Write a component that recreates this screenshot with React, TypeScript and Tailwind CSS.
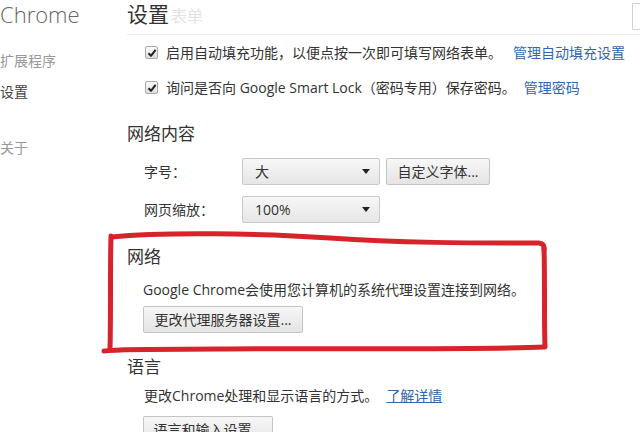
import React from "react";

const font = { fontFamily: '"Open Sans", "Noto Sans CJK SC", sans-serif' };

const CheckBox = () => (
  <span className="w-[13px] h-[13px] border border-[#a9a9a9] rounded-[2px] bg-gradient-to-b from-[#fafafa] to-[#dedede] flex items-center justify-center shrink-0">
    <svg width="10" height="10" viewBox="0 0 10 10">
      <path d="M1.5 5.2 L4 7.8 L8.6 1.8" fill="none" stroke="#222" strokeWidth="2" strokeLinejoin="round" />
    </svg>
  </span>
);

const SelectBox = ({ value }: { value: string }) => (
  <div className="w-[138px] h-[27px] border border-[#c9c9c9] rounded-[2px] bg-gradient-to-b from-[#f7f7f7] to-[#e6e6e6] flex items-center justify-between pl-[12px] pr-[9px] text-[14px] text-[#333]">
    <span>{value}</span>
    <svg width="8" height="5" viewBox="0 0 8 5">
      <path d="M0 0 H8 L4 5 Z" fill="#222" />
    </svg>
  </div>
);

const Btn = ({ children, w }: { children: React.ReactNode; w: string }) => (
  <div className={`${w} h-[27px] border border-[#c4c4c4] rounded-[2px] bg-gradient-to-b from-[#f7f7f7] to-[#e4e4e4] flex items-center justify-center text-[14px] text-[#333]`}>
    {children}
  </div>
);

export default function App() {
  return (
    <div className="relative w-[640px] h-[432px] overflow-hidden bg-white flex items-start" style={font}>
      <div className="w-[127px] shrink-0">
        <div className="text-[22px] leading-[28px] text-[#666] font-light">Chrome</div>
        <div className="mt-[23px] text-[14px] leading-[20px] text-[#999]">扩展程序</div>
        <div className="mt-[11px] text-[14px] leading-[20px] text-[#444]">设置</div>
        <div className="mt-[36px] text-[14px] leading-[20px] text-[#999]">关于</div>
      </div>

      <div className="flex-1 text-[#333]">
        <div className="h-[35px] border-b border-[#eeeeee] flex items-start justify-between">
          <div className="flex items-baseline">
            <span className="text-[21px] leading-[28px] text-[#333]">设置</span>
            <span className="text-[16px] leading-[28px] text-[#e3e3e3] ml-[2px]">表单</span>
          </div>
          <div className="w-[8px] h-[27px] mt-[3px] border border-r-0 border-[#d0d0d0] rounded-l-[2px]" />
        </div>

        <div className="h-[35px] flex items-center pl-[18px] gap-[8px] text-[14px]">
          <CheckBox />
          <span>启用自动填充功能，以便点按一次即可填写网络表单。</span>
          <span className="text-[#2f67b0] ml-[3px]">管理自动填充设置</span>
        </div>
        <div className="h-[35px] flex items-center pl-[18px] gap-[8px] text-[14px]">
          <CheckBox />
          <span>询问是否向 Google Smart Lock（密码专用）保存密码。</span>
          <span className="text-[#2f67b0] ml-[0px]">管理密码</span>
        </div>

        <div className="mt-[17px] text-[17px] leading-[24px]">网络内容</div>
        <div className="mt-[12px] flex items-center pl-[17px]">
          <span className="w-[98px] text-[14px]">字号：</span>
          <SelectBox value="大" />
          <div className="ml-[6px]">
            <Btn w="w-[104px]">自定义字体...</Btn>
          </div>
        </div>
        <div className="mt-[11px] flex items-center pl-[17px]">
          <span className="w-[98px] text-[14px]">网页缩放：</span>
          <SelectBox value="100%" />
        </div>

        <div className="mt-[22px] text-[17px] leading-[24px]">网络</div>
        <div className="mt-[11px] pl-[16px] text-[14px] leading-[20px]">Google Chrome会使用您计算机的系统代理设置连接到网络。</div>
        <div className="mt-[6px] pl-[16px]">
          <Btn w="w-[160px]">更改代理服务器设置...</Btn>
        </div>

        <div className="mt-[22px] text-[17px] leading-[24px]">语言</div>
        <div className="mt-[7px] pl-[17px] text-[14px] leading-[20px]">
          更改Chrome处理和显示语言的方式。
          <span className="ml-[8px] text-[#2f67b0] underline">了解详情</span>
        </div>
        <div className="mt-[10px] pl-[16px]">
          <Btn w="w-[130px]">语言和输入设置...</Btn>
        </div>
      </div>

      <svg className="absolute left-0 top-0 pointer-events-none" width="640" height="432" viewBox="0 0 640 432">
        <g fill="none" stroke="#d7232a" strokeWidth="5" strokeLinecap="round" strokeLinejoin="round">
          <path d="M112 237 C160 232 260 233 330 238 S470 243 538 243 Q545 243 544 250" />
          <path d="M544 248 C545 280 544 320 545 346" />
          <path d="M545 347 C470 350 330 348 220 349 S130 349 104 351" />
          <path d="M111 236 C110 270 111 310 110 349" />
        </g>
      </svg>
    </div>
  );
}
